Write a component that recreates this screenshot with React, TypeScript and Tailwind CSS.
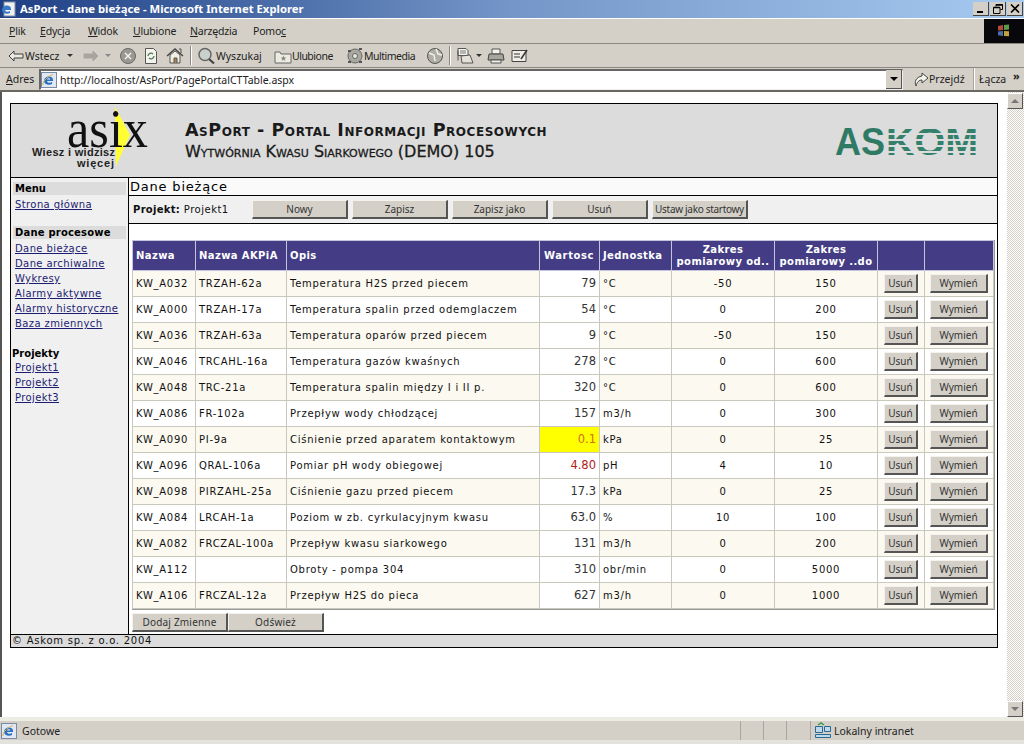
import type { ReactNode } from "react";

const rows = [
  ["KW_A032", "TRZAH-62a", "Temperatura H2S przed piecem", "79", "°C", "-50", "150"],
  ["KW_A000", "TRZAH-17a", "Temperatura spalin przed odemglaczem", "54", "°C", "0", "200"],
  ["KW_A036", "TRZAH-63a", "Temperatura oparów przed piecem", "9", "°C", "-50", "150"],
  ["KW_A046", "TRCAHL-16a", "Temperatura gazów kwaśnych", "278", "°C", "0", "600"],
  ["KW_A048", "TRC-21a", "Temperatura spalin między I i II p.", "320", "°C", "0", "600"],
  ["KW_A086", "FR-102a", "Przepływ wody chłodzącej", "157", "m3/h", "0", "300"],
  ["KW_A090", "PI-9a", "Ciśnienie przed aparatem kontaktowym", "0.1", "kPa", "0", "25"],
  ["KW_A096", "QRAL-106a", "Pomiar pH wody obiegowej", "4.80", "pH", "4", "10"],
  ["KW_A098", "PIRZAHL-25a", "Ciśnienie gazu przed piecem", "17.3", "kPa", "0", "25"],
  ["KW_A084", "LRCAH-1a", "Poziom w zb. cyrkulacyjnym kwasu", "63.0", "%", "10", "100"],
  ["KW_A082", "FRCZAL-100a", "Przepływ kwasu siarkowego", "131", "m3/h", "0", "200"],
  ["KW_A112", "", "Obroty - pompa 304", "310", "obr/min", "0", "5000"],
  ["KW_A106", "FRCZAL-12a", "Przepływ H2S do pieca", "627", "m3/h", "0", "1000"],
];

const btn3d =
  "bg-[#d4d0c8] border-t border-l border-t-[#f4f2ec] border-l-[#f4f2ec] border-r-2 border-b-2 border-r-[#555] border-b-[#555] font-['Noto_Sans',sans-serif] text-[10px] text-[#333] flex items-center justify-center whitespace-nowrap";

const chrome = "font-['Noto_Sans',sans-serif] text-[10.5px] text-[#222] pt-[2px]";

function IeIcon() {
  return (
    <svg width="16" height="16" viewBox="0 0 16 16" className="shrink-0">
      <rect x="0.5" y="0.5" width="15" height="15" fill="#dfe8f4" stroke="#7a8aa0" />
      <path d="M3 9c0-4 5-6 8-3.500 1 1 1 2.500 1 3.500H6c.2 2 3.400 2.400 5 1v2c-3 1.600-8 .5-8-3zM6 7.500h3.500C9 5.800 6.500 5.800 6 7.500z" fill="#2a6fc0" />
      <path d="M2 13c-1-2 3-8 10-10.500" fill="none" stroke="#e0b040" />
    </svg>
  );
}

function ToolIcon({ children }: { children: ReactNode }) {
  return (
    <svg width="20" height="20" viewBox="0 0 20 20" className="shrink-0">
      {children}
    </svg>
  );
}

function TitleBar() {
  return (
    <div className="h-[18px] flex items-center bg-gradient-to-r from-[#1f3f84] via-[#7496c8] to-[#a6caf0] pl-[1px] pr-[1px]">
      <svg width="16" height="16" viewBox="0 0 16 16" className="shrink-0">
        <rect x="3" y="1" width="11" height="14" fill="#f0f0f0" stroke="#8090a8" />
        <path d="M1 9c0-4 5-6 8-3.500 1 1 1 2.500 1 3.500H4c.2 2 3.400 2.400 5 1v2c-3 1.600-8 .5-8-3z" fill="#3878c8" />
      </svg>
      <span className="ml-[3px] font-['Noto_Sans',sans-serif] text-[11.3px] font-bold text-white leading-none">
        AsPort - dane bieżące - Microsoft Internet Explorer
      </span>
      <div className="ml-auto flex gap-[1px]">
        <div className="w-[16px] h-[14px] bg-[#d4d0c8] border-b border-r border-[#444] flex items-end pl-[4px] pb-[2px]">
          <div className="w-[6px] h-[2px] bg-black" />
        </div>
        <div className="w-[16px] h-[14px] bg-[#d4d0c8] border-b border-r border-[#444] flex items-center justify-center">
          <svg width="10" height="10" viewBox="0 0 10 10">
            <path d="M3 2.500V.5h6.500v5H7.500M.5 3.500h6.500v6H.5z" fill="none" stroke="#000" />
            <path d="M3 1h6.500M.5 3.500H7" stroke="#000" strokeWidth="1.500" />
          </svg>
        </div>
        <div className="w-[16px] h-[14px] bg-[#d4d0c8] border-b border-r border-[#444] flex items-center justify-center">
          <svg width="10" height="9" viewBox="0 0 10 9">
            <path d="M1 .5l8 8M9 .5l-8 8" stroke="#000" strokeWidth="1.600" />
          </svg>
        </div>
      </div>
    </div>
  );
}

function MenuBar() {
  return (
    <div className="h-[26px] flex items-center bg-[#d4d0c8] border-t border-t-white border-b border-b-[#8a8880]">
      <div className={`flex items-center pl-[9px] tracking-[-0.2px] ${chrome}`}>
        <span className="w-[31px]">
          <u>P</u>lik
        </span>
        <span className="w-[48px]">
          <u>E</u>dycja
        </span>
        <span className="w-[45px]">
          <u>W</u>idok
        </span>
        <span className="w-[57px]">
          <u>U</u>lubione
        </span>
        <span className="w-[63px]">
          <u>N</u>arzędzia
        </span>
        <span>
          Pomo<u>c</u>
        </span>
      </div>
      <div className="ml-auto w-[40px] h-[24px] bg-[#08080c] flex items-center justify-center">
        <svg width="16" height="14" viewBox="0 0 16 14">
          <path d="M2 2l5-1v5l-5 .6z" fill="#b04a3a" />
          <path d="M8 1l5-.6v5.200L8 6z" fill="#5a9a4a" />
          <path d="M2 7.500L7 7v5l-5-.7z" fill="#4a70a8" />
          <path d="M8 7l5 .3v5L8 12z" fill="#c0a040" />
        </svg>
      </div>
    </div>
  );
}

function ToolBar() {
  return (
    <div className="h-[24px] flex items-center bg-[#d4d0c8] border-b border-b-[#8a8880] pl-[8px]">
      <svg width="16" height="12" viewBox="0 0 16 12" className="shrink-0">
        <path d="M6 1L1 6l5 5V8h9V4H6z" fill="#e8e8e0" stroke="#404040" />
      </svg>
      <span className={`${chrome} ml-[1px] w-[35px]`}>Wstecz</span>
      <div className="ml-[7px] w-0 h-0 border-x-[3px] border-x-transparent border-t-[3px] border-t-[#333]" />
      <svg width="16" height="12" viewBox="0 0 16 12" className="ml-[10px] shrink-0">
        <path d="M10 1l5 5-5 5V8H1V4h9z" fill="#a8a69e" stroke="#a8a69e" />
      </svg>
      <div className="ml-[6px] w-0 h-0 border-x-[3px] border-x-transparent border-t-[3px] border-t-[#888]" />
      <div className="ml-[7px]">
        <ToolIcon>
          <circle cx="10" cy="10" r="7.500" fill="#9a9890" stroke="#6a6860" />
          <path d="M7 7l6 6M13 7l-6 6" stroke="#eee" strokeWidth="1.600" />
        </ToolIcon>
      </div>
      <div className="ml-[3px]">
        <ToolIcon>
          <path d="M4.500 2.500h8l3 3v12h-11z" fill="#f4f4ec" stroke="#555" />
          <path d="M7 10a3 3 0 0 1 5-2M13 10a3 3 0 0 1-5 2" fill="none" stroke="#4a7a5a" strokeWidth="1.300" />
        </ToolIcon>
      </div>
      <div className="ml-[4px]">
        <ToolIcon>
          <path d="M2 10l8-7 8 7" fill="none" stroke="#444" strokeWidth="1.400" />
          <path d="M5 9v8h10V9l-5-4z" fill="#f0eee4" stroke="#555" />
          <path d="M9 17v-5h3v5" fill="#b08050" stroke="#555" />
          <path d="M14 3h2v4" fill="none" stroke="#555" />
        </ToolIcon>
      </div>
      <div className="ml-[5px] w-[2px] h-[19px] border-l border-l-[#8a8880] border-r border-r-white" />
      <div className="ml-[4px]">
        <ToolIcon>
          <circle cx="9" cy="8.500" r="6" fill="#c8d0cc" stroke="#666" strokeWidth="1.500" />
          <path d="M13 13l5 4.500" stroke="#444" strokeWidth="2.200" />
        </ToolIcon>
      </div>
      <span className={`${chrome} w-[46px]`}>Wyszukaj</span>
      <div className="ml-[11px]">
        <ToolIcon>
          <path d="M2 6h5l1 2h10v9H2z" fill="#ecebe0" stroke="#666" />
          <path d="M10.500 9.500l.8 2 2 .2-1.600 1.300.6 2-1.800-1.200-1.800 1.200.6-2-1.600-1.300 2-.2z" fill="#8a8880" />
        </ToolIcon>
      </div>
      <span className={`${chrome} w-[41px] -ml-[1px] tracking-[-0.5px]`}>Ulubione</span>
      <div className="ml-[12px]">
        <ToolIcon>
          <circle cx="10" cy="10" r="7" fill="#a8a89e" stroke="#666" />
          <circle cx="10" cy="10" r="2.500" fill="#e8e8e0" stroke="#666" />
          <path d="M3 5h3M14 3h3M3 16h3M14 16h3" stroke="#555" strokeWidth="2" />
        </ToolIcon>
      </div>
      <span className={`${chrome} w-[50px] -ml-[1px] tracking-[-0.5px]`}>Multimedia</span>
      <div className="ml-[11px]">
        <ToolIcon>
          <circle cx="10" cy="10" r="7.500" fill="#b0aea4" stroke="#555" />
          <path d="M4 7l5 2 1 6M11 3l2 5 4 1" fill="none" stroke="#f0f0e8" strokeWidth="1.500" />
        </ToolIcon>
      </div>
      <div className="ml-[4px] w-[2px] h-[19px] border-l border-l-[#8a8880] border-r border-r-white" />
      <div className="ml-[4px]">
        <ToolIcon>
          <path d="M3 2.500h8l2 2v5H3zM3 4.500v10" fill="#f4f4ec" stroke="#555" />
          <path d="M6 10l9-1 3 8H7z" fill="#e4e2d8" stroke="#555" />
          <path d="M5 5h6M5 7h6" stroke="#777" />
        </ToolIcon>
      </div>
      <div className="ml-[1px] w-0 h-0 border-x-[3px] border-x-transparent border-t-[3px] border-t-[#333]" />
      <div className="ml-[4px]">
        <ToolIcon>
          <path d="M6 3h8v5H6z" fill="#f4f4ec" stroke="#555" />
          <path d="M3 8h14l1 6H2z" fill="#a8a69c" stroke="#444" />
          <path d="M5 14h10v3H5z" fill="#f0f0e8" stroke="#555" />
        </ToolIcon>
      </div>
      <div className="ml-[4px]">
        <ToolIcon>
          <path d="M2 4.500h14v11H2z" fill="#f0eee4" stroke="#444" />
          <path d="M4 8h6M4 11h6" stroke="#333" />
          <path d="M11 13l6-9" stroke="#333" strokeWidth="1.500" />
        </ToolIcon>
      </div>
    </div>
  );
}

function AddressBar() {
  return (
    <div className="h-[24px] flex items-center bg-[#d4d0c8] border-b-2 border-b-[#6a6860] pl-[6px]">
      <span className={`${chrome} w-[27px]`}>
        <u>A</u>dres
      </span>
      <div className="ml-[6px] w-[864px] shrink-0 h-[21px] flex items-center bg-white border-t-2 border-l-2 border-t-[#666] border-l-[#666] border-b border-r border-b-[#eee] border-r-[#eee]">
        <IeIcon />
        <span className={`${chrome} ml-[3px]`}>http://localhost/AsPort/PagePortalCTTable.aspx</span>
        <div className="ml-auto w-[16px] h-[19px] bg-[#d4d0c8] border-r border-b border-[#555] flex items-center justify-center">
          <div className="w-0 h-0 border-x-[4px] border-x-transparent border-t-[4px] border-t-black" />
        </div>
      </div>
      <div className="ml-[10px] w-[60px] shrink-0 flex items-center">
        <svg width="16" height="18" viewBox="0 0 16 18" className="shrink-0">
          <path d="M3 16C1 12 3 7 9 6V3l6 5-6 5v-3c-3 0-5 2-6 6z" fill="#f4f4ec" stroke="#444" />
        </svg>
        <span className={chrome}>Przejdź</span>
      </div>
      <div className="w-[2px] h-[22px] border-l border-l-[#a8a69e] border-r border-r-white" />
      <span className={`${chrome} ml-[4px] w-[28px]`}>Łącza</span>
      <span className="ml-[6px] font-['Noto_Sans',sans-serif] text-[11px] font-bold text-[#222] -mt-[6px]">»</span>
    </div>
  );
}

function Logo() {
  return (
    <svg width="174" height="73" viewBox="0 0 174 73" className="shrink-0 overflow-visible">
      <path d="M104 3l15 28-14 31z" fill="#ffff33" />
      <text x="56" y="43" fontFamily="'Liberation Serif',serif" fontSize="54" fill="#111" textLength="81" lengthAdjust="spacingAndGlyphs">
        asix
      </text>
      <text x="21" y="52" fontFamily="'Liberation Sans',sans-serif" fontSize="11" fontWeight="700" fill="#222" textLength="83">
        Wiesz i widzisz
      </text>
      <text x="66" y="63" fontFamily="'Liberation Sans',sans-serif" fontSize="11" fontWeight="700" fill="#222" textLength="37">
        więcej
      </text>
    </svg>
  );
}

function Askom() {
  return (
    <svg width="154" height="48" viewBox="0 0 154 48" className="shrink-0">
      <defs>
        <pattern id="stripes" width="4" height="6" patternUnits="userSpaceOnUse">
          <rect width="4" height="4" fill="#35806a" />
        </pattern>
      </defs>
      <text x="5" y="38" fontFamily="'Liberation Sans',sans-serif" fontSize="39" fontWeight="700" fill="#2f7a64" textLength="50" lengthAdjust="spacingAndGlyphs">
        AS
      </text>
      <text x="56" y="38" fontFamily="'Liberation Sans',sans-serif" fontSize="39" fontWeight="700" fill="url(#stripes)" textLength="92" lengthAdjust="spacingAndGlyphs">
        KOM
      </text>
    </svg>
  );
}

function SideLink({ children }: { children: ReactNode }) {
  return <div className="h-[15px] pl-[2px] leading-[15px] text-[#1c1c72] underline tracking-[0.4px] whitespace-nowrap">{children}</div>;
}

function Sidebar() {
  return (
    <div className="w-[118px] shrink-0 bg-[#f0f0f0] border-r border-r-black pt-[4px] pl-[2px] pr-[2px] font-['DejaVu_Sans',sans-serif] text-[10px]">
      <div className="h-[13px] bg-[#dcdcdc] pl-[2px] leading-[13px] font-bold text-black">Menu</div>
      <div className="mt-[2px]">
        <SideLink>Strona główna</SideLink>
      </div>
      <div className="mt-[14px] h-[13px] bg-[#dcdcdc] pl-[2px] leading-[13px] font-bold text-black tracking-[0.2px]">Dane procesowe</div>
      <div className="mt-[2px]">
        <SideLink>Dane bieżące</SideLink>
        <SideLink>Dane archiwalne</SideLink>
        <SideLink>Wykresy</SideLink>
        <SideLink>Alarmy aktywne</SideLink>
        <SideLink>Alarmy historyczne</SideLink>
        <SideLink>Baza zmiennych</SideLink>
      </div>
      <div className="mt-[16px] h-[13px] -ml-[1px] leading-[14px] font-bold text-black">Projekty</div>
      <SideLink>Projekt1</SideLink>
      <SideLink>Projekt2</SideLink>
      <SideLink>Projekt3</SideLink>
    </div>
  );
}

function DataTable() {
  const th = "border border-[#c4c4dc] bg-[#443c84] text-white font-bold text-[10px] leading-[12px] align-middle tracking-[0.4px]";
  const td = "border border-[#c8c8bc] px-[3px] align-middle text-[10px] text-[#111] tracking-[0.73px] whitespace-nowrap overflow-hidden";
  return (
    <div className="w-fit border-r border-b border-r-[#999] border-b-[#999]">
      <table className="table-fixed border-collapse w-[861px] font-['DejaVu_Sans',sans-serif]">
        <colgroup>
          <col className="w-[63px]" />
          <col className="w-[91px]" />
          <col className="w-[253px]" />
          <col className="w-[60px]" />
          <col className="w-[72px]" />
          <col className="w-[103px]" />
          <col className="w-[103px]" />
          <col className="w-[47px]" />
          <col className="w-[69px]" />
        </colgroup>
        <thead>
          <tr className="h-[30px]">
            <th className={`${th} text-left px-[3px]`}>Nazwa</th>
            <th className={`${th} text-left px-[3px]`}>Nazwa AKPiA</th>
            <th className={`${th} text-left px-[3px]`}>Opis</th>
            <th className={`${th} text-left pl-[4px] pr-0 tracking-[0.6px]`}>Wartosc</th>
            <th className={`${th} text-left px-[3px] whitespace-nowrap`}>Jednostka</th>
            <th className={`${th} text-center`}>
              Zakres
              <br />
              pomiarowy od..
            </th>
            <th className={`${th} text-center`}>
              Zakres
              <br />
              pomiarowy ..do
            </th>
            <th className={th} />
            <th className={th} />
          </tr>
        </thead>
        <tbody>
          {rows.map((r, i) => {
            const alarm = r[0] === "KW_A090";
            const low = r[0] === "KW_A096";
            return (
              <tr key={r[0]} className={`h-[26px] ${i % 2 === 0 ? "bg-[#fbf9f0]" : "bg-white"}`}>
                <td className={td}>{r[0]}</td>
                <td className={td}>{r[1]}</td>
                <td className={td}>{r[2]}</td>
                <td
                  className={`border border-[#c8c8bc] pr-[3px] text-right align-middle font-['DejaVu_Sans',sans-serif] text-[11.5px] ${
                    alarm ? "bg-[#ffff00] text-[#d0701a]" : low ? "bg-white text-[#b01c1c]" : "bg-white text-[#333]"
                  }`}
                >
                  {r[3]}
                </td>
                <td className={td}>{r[4]}</td>
                <td className={`${td} text-center`}>{r[5]}</td>
                <td className={`${td} text-center`}>{r[6]}</td>
                <td className="border border-[#c8c8bc] align-middle">
                  <div className={`${btn3d} w-[34px] h-[19px] mx-auto`}>Usuń</div>
                </td>
                <td className="border border-[#c8c8bc] align-middle">
                  <div className={`${btn3d} w-[58px] h-[19px] mx-auto`}>Wymień</div>
                </td>
              </tr>
            );
          })}
        </tbody>
      </table>
    </div>
  );
}

function Page() {
  const wide = `${btn3d} w-[96px] h-[19px]`;
  return (
    <div className="w-[988px] border border-black bg-white">
      <div className="h-[74px] flex items-center bg-[#dcdcdc] border-b border-b-black">
        <Logo />
        <div className="w-[645px] shrink-0 font-['DejaVu_Sans',sans-serif] [font-variant:small-caps] text-[#1a1a1a]">
          <div className="text-[17.5px] leading-[22px] font-bold tracking-[0.55px] -mt-[1px] whitespace-nowrap">AsPort - Portal Informacji Procesowych</div>
          <div className="text-[16px] leading-[20px] mt-[1px] whitespace-nowrap [-webkit-text-stroke:0.3px_#1a1a1a]">Wytwórnia Kwasu Siarkowego (DEMO) 105</div>
        </div>
        <Askom />
      </div>
      <div className="flex">
        <Sidebar />
        <div className="flex-1 h-[456px]">
          <div className="h-[18px] border-b border-b-black pl-[1px] font-['DejaVu_Sans',sans-serif] text-[13px] leading-[17px] tracking-[0.8px] text-black bg-[#fafafa]">
            Dane bieżące
          </div>
          <div className="h-[28px] flex items-center bg-[#f0f0f0] border-b border-b-black pl-[4px] font-['DejaVu_Sans',sans-serif] text-[10px] text-[#111]">
            <span className="w-[119px] shrink-0 tracking-[0.5px]">
              <b className="tracking-[0.3px]">Projekt:</b> Projekt1
            </span>
            <div className="flex gap-[4px]">
              <div className={wide}>Nowy</div>
              <div className={wide}>Zapisz</div>
              <div className={wide}>Zapisz jako</div>
              <div className={wide}>Usuń</div>
              <div className={`${wide} text-[9.5px] tracking-[-0.3px]`}>Ustaw jako startowy</div>
            </div>
          </div>
          <div className="pl-[3px] pt-[16px]">
            <DataTable />
            <div className="flex mt-[3px]">
              <div className={`${btn3d} w-[96px] h-[19px] tracking-[0.2px]`}>Dodaj Zmienne</div>
              <div className={`${btn3d} w-[96px] h-[19px] tracking-[0.2px]`}>Odśwież</div>
            </div>
          </div>
        </div>
      </div>
      <div className="h-[13px] bg-[#dcdcdc] border-t border-t-black pl-[1px] font-['DejaVu_Sans',sans-serif] text-[10px] leading-[12px] tracking-[0.75px] text-[#111]">
        © Askom sp. z o.o. 2004
      </div>
    </div>
  );
}

function Scrollbar() {
  const arrow = "w-[16px] h-[16px] bg-[#d4d0c8] border-r border-b border-r-[#555] border-b-[#555] border-t border-l border-t-white border-l-white flex items-center justify-center";
  return (
    <div className="w-[17px] shrink-0 ml-auto flex flex-col bg-[repeating-conic-gradient(#d4d0c8_0_25%,#ffffff_0_50%)] bg-[length:2px_2px]">
      <div className={`${arrow} mt-[1px]`}>
        <div className="w-0 h-0 border-x-[4px] border-x-transparent border-b-[4px] border-b-[#777]" />
      </div>
      <div className="flex-1" />
      <div className={arrow}>
        <div className="w-0 h-0 border-x-[4px] border-x-transparent border-t-[4px] border-t-[#777]" />
      </div>
    </div>
  );
}

function StatusBar() {
  const cell = "h-full border-l border-l-[#a8a69e]";
  return (
    <div className="h-[27px] flex items-center bg-[#d4d0c8] border-t-4 border-b-4 border-t-[#ecebe4] border-b-[#e4e2dc] pl-[1px]">
      <IeIcon />
      <span className={`${chrome} ml-[5px]`}>Gotowe</span>
      <div className={`${cell} ml-auto w-[23px]`} />
      <div className={`${cell} w-[23px]`} />
      <div className={`${cell} w-[24px]`} />
      <div className="w-[214px] h-full flex items-center border-l border-l-[#a8a69e] pl-[3px]">
        <svg width="18" height="18" viewBox="0 0 18 18" className="shrink-0">
          <path d="M1.500 4.500h7v6h-7zM10.500 4.500h6v5h-6zM1.500 12.500h15v3h-15z" fill="#bcd8ec" stroke="#2a6a90" />
          <path d="M4 3l3-2 3 2" fill="none" stroke="#3a9a4a" strokeWidth="1.500" />
        </svg>
        <span className={`${chrome} ml-[2px]`}>Lokalny intranet</span>
      </div>
    </div>
  );
}

export default function App() {
  return (
    <div className="w-[1024px] h-[744px] flex flex-col overflow-hidden bg-white">
      <TitleBar />
      <MenuBar />
      <ToolBar />
      <AddressBar />
      <div className="flex-1 flex min-h-0 border-l-2 border-l-[#555]">
        <div className="pl-[8px] pt-[11px]">
          <Page />
        </div>
        <Scrollbar />
      </div>
      <StatusBar />
    </div>
  );
}
